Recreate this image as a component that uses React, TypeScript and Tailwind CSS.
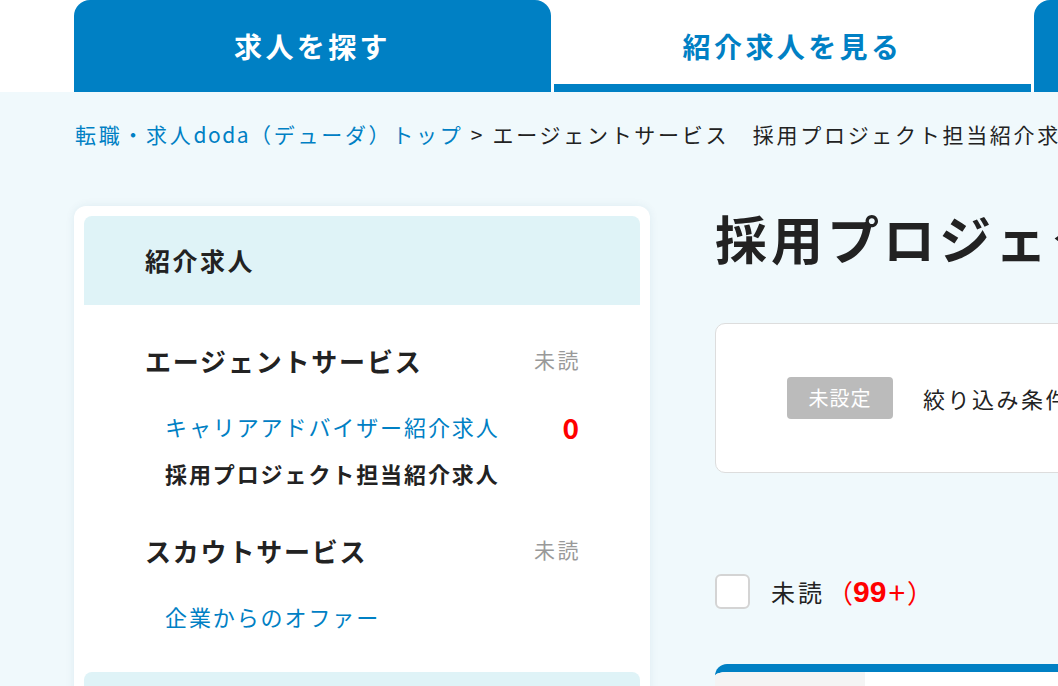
import React from "react";

const font = { fontFamily: '"Noto Sans CJK JP", "Noto Sans", sans-serif' };

export default function App() {
  return (
    <div className="w-[1058px] h-[686px] overflow-hidden bg-[#f0f9fc] text-[#222]" style={font}>
      {/* tabs */}
      <div className="h-[92px] bg-white flex pl-[74px] gap-[3px] items-stretch">
        <div className="w-[477px] shrink-0 bg-[#0080c4] rounded-t-[16px] flex items-center justify-center text-white font-bold text-[28px] tracking-[3.4px]">
          求人を探す
        </div>
        <div className="w-[477px] shrink-0 flex flex-col">
          <div className="flex-1 flex items-center justify-center text-[#0080c4] font-bold text-[28px] tracking-[3.4px] pt-[8px]">
            紹介求人を見る
          </div>
          <div className="h-[8px] bg-[#0080c4]" />
        </div>
        <div className="w-[477px] shrink-0 bg-[#0080c4] rounded-t-[16px]" />
      </div>

      {/* breadcrumb */}
      <div className="pl-[75px] pt-[27px] h-[30px] box-content leading-[30px] text-[21px] tracking-[2.7px] whitespace-nowrap">
        <span className="text-[#0080c4]">
          転職・求人<span className="tracking-[1.5px]">doda</span>（デューダ）トップ
        </span>
        <span className="text-[#222]"> &gt;&nbsp;エージェントサービス　採用プロジェクト担当紹介求人</span>
      </div>

      <div className="flex pl-[74px] mt-[57px] gap-[65px] items-start">
        {/* sidebar */}
        <div className="w-[576px] shrink-0 bg-white rounded-[12px] shadow-[0_0_10px_rgba(0,80,120,0.08)] p-[10px]">
          <div className="h-[89px] bg-[#dff3f7] rounded-t-[8px] flex items-center pl-[61px] text-[25px] font-bold tracking-[2.5px]">
            紹介求人
          </div>
          <div className="pt-[37px] pb-[32px] px-[61px] flex flex-col gap-[35px]">
            <div>
              <div className="h-[36px] flex items-center justify-between">
                <span className="text-[26px] font-bold tracking-[1.8px]">エージェントサービス</span>
                <span className="text-[21px] text-[#999] tracking-[2.5px] -mr-[2px]">未読</span>
              </div>
              <div className="mt-[25px] pl-[20px]">
                <div className="h-[47px] flex items-center justify-between">
                  <span className="text-[22px] text-[#0080c4] tracking-[1.9px]">キャリアアドバイザー紹介求人</span>
                  <span className="text-[28px] font-bold text-[#ff0000]">0</span>
                </div>
                <div className="h-[47px] flex items-center">
                  <span className="text-[22px] font-bold tracking-[1.9px]">採用プロジェクト担当紹介求人</span>
                </div>
              </div>
            </div>
            <div>
              <div className="h-[36px] flex items-center justify-between">
                <span className="text-[26px] font-bold tracking-[1.8px]">スカウトサービス</span>
                <span className="text-[21px] text-[#999] tracking-[2.5px] -mr-[2px]">未読</span>
              </div>
              <div className="mt-[25px] pl-[20px]">
                <div className="h-[47px] flex items-center">
                  <span className="text-[22px] text-[#0080c4] tracking-[1.9px]">企業からのオファー</span>
                </div>
              </div>
            </div>
          </div>
          <div className="h-[89px] bg-[#dff3f7] rounded-t-[8px]" />
        </div>

        {/* main */}
        <div className="flex-1 min-w-0">
          <div className="h-[64px] leading-[64px] text-[52px] font-bold tracking-[4px] whitespace-nowrap">
            採用プロジェクト担当紹介求人
          </div>
          <div className="mt-[53px] h-[150px] w-[700px] bg-white border border-[#dddddd] rounded-[10px] flex items-center pl-[71px] gap-[30px]">
            <div className="w-[106px] h-[42px] bg-[#bbbbbb] rounded-[4px] flex items-center justify-center text-white text-[20px] tracking-[1px]">
              未設定
            </div>
            <span className="text-[22px] tracking-[2.5px] whitespace-nowrap">絞り込み条件が設定されていません</span>
          </div>
          <div className="mt-[101px] h-[35px] flex items-center">
            <div className="w-[35px] h-[35px] bg-white border-2 border-[#d4d4d4] rounded-[6px]" />
            <span className="ml-[21px] text-[24px] tracking-[3px]">未読</span>
            <span className="ml-[2px] text-[26px] text-[#ff0000] flex items-center">
              <span>（</span>
              <span className="font-bold text-[30px]" style={{ fontFamily: '"Liberation Sans", Arial, sans-serif' }}>99</span>
              <span className="text-[30px] px-[2px]">+</span>
              <span>）</span>
            </span>
          </div>
          <div className="mt-[55px] w-[700px] rounded-tl-[12px] overflow-hidden border-t-[8px] border-[#0080c4] flex h-[40px]">
            <div className="w-[150px] bg-[#f4f4f4]" />
            <div className="flex-1 bg-white" />
          </div>
        </div>
      </div>
    </div>
  );
}
